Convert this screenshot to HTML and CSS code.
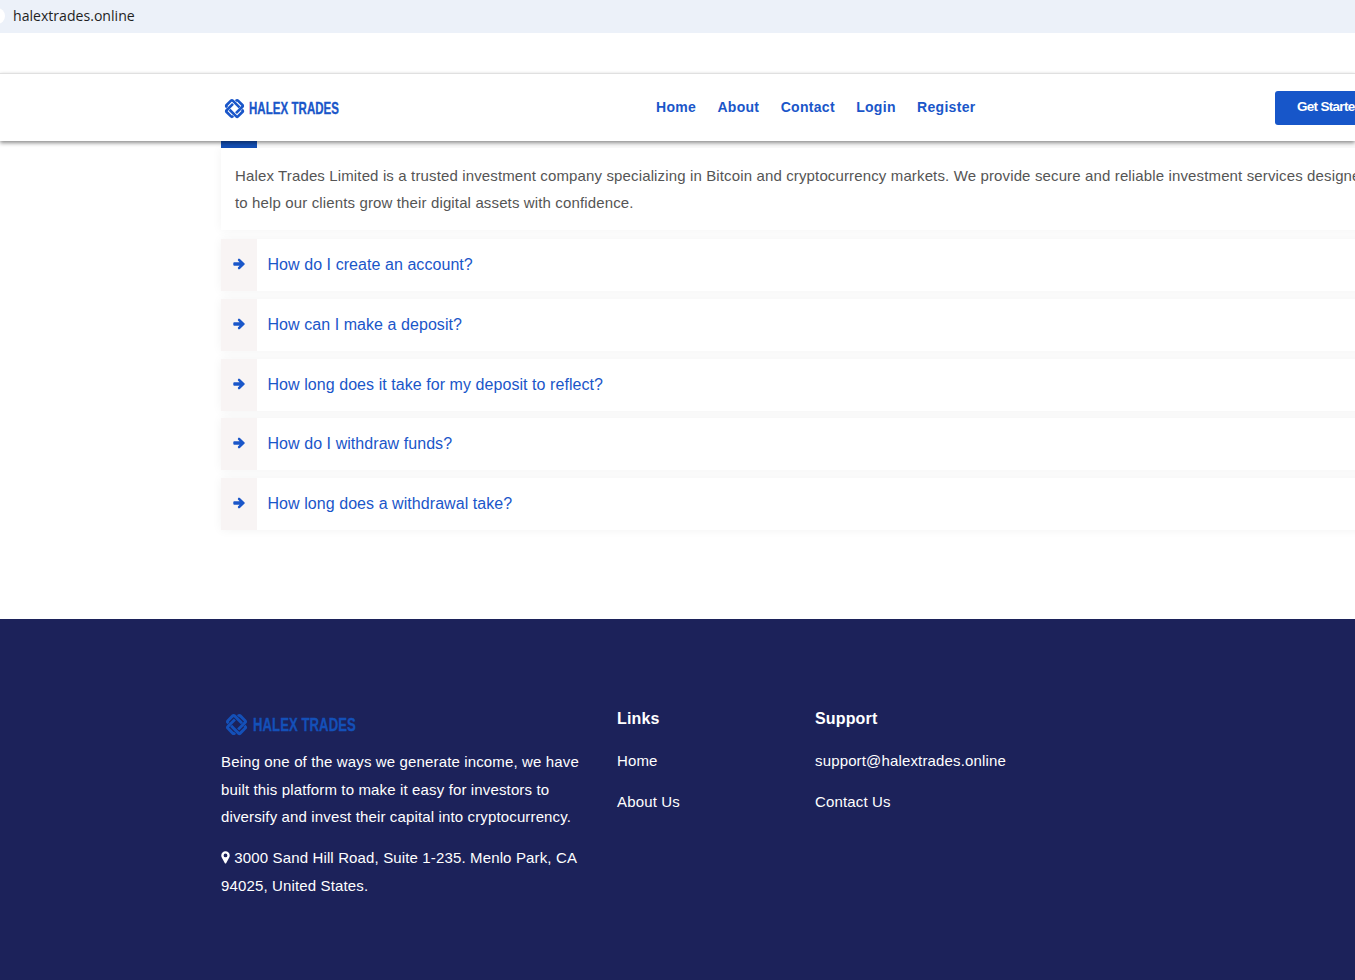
FILE: index.html
```html
<!DOCTYPE html>
<html lang="en">
<head>
<meta charset="utf-8">
<title>Halex Trades</title>
<link rel="stylesheet" href="styles.css">
</head>
<body>
<div class="addressbar"><span class="addressbar-dot"></span><span class="addressbar-url">halextrades.online</span></div>
<div class="topstrip"></div>
<header class="site-header">
  <div class="header-inner">
    <a class="logo logo-header" href="#">
      <svg class="logo-mark" viewBox="0 0 24 24" aria-hidden="true"><path d="M17.7 10.7 10 3Q9 2 8 3L3 8Q2 9 3 10L3.6 10.6M6.4 13.4 14 21Q15 22 16 21L21 16Q22 15 21 14L20.4 13.4M10.3 6.7 3 14Q2 15 3 16L8 21Q9 22 10 21L10.5 20.5M13.5 3.5 14 3Q15 2 16 3L21 8Q22 9 21 10L13.7 17.3"/></svg>
      <span class="logo-text">HALEX TRADES</span>
    </a>
    <nav class="main-nav">
      <a href="#">Home</a><a href="#">About</a><a href="#">Contact</a><a href="#">Login</a><a href="#">Register</a>
    </nav>
    <a class="cta" href="#">Get Started</a>
  </div>
</header>
<main class="faq">
  <div class="faq-tab"></div>
  <div class="faq-answer">
    <p>Halex Trades Limited is a trusted investment company specializing in Bitcoin and cryptocurrency markets. We provide secure and reliable investment services designed to help our clients grow their digital assets with confidence.</p>
  </div>
  <ul class="faq-list">
    <li class="faq-item"><span class="faq-icon"><svg viewBox="0 0 12 12" aria-hidden="true"><path d="M5.8.6 6.9 1 11.6 5.4Q12 6 11.6 6.6L6.9 11 5.8 11.4 4.9 10.5 4.9 9.4 6.6 7.7H.9L.3 7.1V4.9L.9 4.3H6.6L4.9 2.6V1.5Z"/></svg></span><span class="faq-q">How do I create an account?</span></li>
    <li class="faq-item"><span class="faq-icon"><svg viewBox="0 0 12 12" aria-hidden="true"><path d="M5.8.6 6.9 1 11.6 5.4Q12 6 11.6 6.6L6.9 11 5.8 11.4 4.9 10.5 4.9 9.4 6.6 7.7H.9L.3 7.1V4.9L.9 4.3H6.6L4.9 2.6V1.5Z"/></svg></span><span class="faq-q">How can I make a deposit?</span></li>
    <li class="faq-item"><span class="faq-icon"><svg viewBox="0 0 12 12" aria-hidden="true"><path d="M5.8.6 6.9 1 11.6 5.4Q12 6 11.6 6.6L6.9 11 5.8 11.4 4.9 10.5 4.9 9.4 6.6 7.7H.9L.3 7.1V4.9L.9 4.3H6.6L4.9 2.6V1.5Z"/></svg></span><span class="faq-q">How long does it take for my deposit to reflect?</span></li>
    <li class="faq-item"><span class="faq-icon"><svg viewBox="0 0 12 12" aria-hidden="true"><path d="M5.8.6 6.9 1 11.6 5.4Q12 6 11.6 6.6L6.9 11 5.8 11.4 4.9 10.5 4.9 9.4 6.6 7.7H.9L.3 7.1V4.9L.9 4.3H6.6L4.9 2.6V1.5Z"/></svg></span><span class="faq-q">How do I withdraw funds?</span></li>
    <li class="faq-item"><span class="faq-icon"><svg viewBox="0 0 12 12" aria-hidden="true"><path d="M5.8.6 6.9 1 11.6 5.4Q12 6 11.6 6.6L6.9 11 5.8 11.4 4.9 10.5 4.9 9.4 6.6 7.7H.9L.3 7.1V4.9L.9 4.3H6.6L4.9 2.6V1.5Z"/></svg></span><span class="faq-q">How long does a withdrawal take?</span></li>
  </ul>
</main>
<footer class="site-footer">
  <div class="footer-inner">
    <div class="footer-about">
      <a class="logo logo-footer" href="#">
        <svg class="logo-mark" viewBox="0 0 24 24" aria-hidden="true"><path d="M17.7 10.7 10 3Q9 2 8 3L3 8Q2 9 3 10L3.6 10.6M6.4 13.4 14 21Q15 22 16 21L21 16Q22 15 21 14L20.4 13.4M10.3 6.7 3 14Q2 15 3 16L8 21Q9 22 10 21L10.5 20.5M13.5 3.5 14 3Q15 2 16 3L21 8Q22 9 21 10L13.7 17.3"/></svg>
        <span class="logo-text">HALEX TRADES</span>
      </a>
      <p>Being one of the ways we generate income, we have built this platform to make it easy for investors to diversify and invest their capital into cryptocurrency.</p>
      <p class="address"><svg class="pin" viewBox="0 0 10 14" aria-hidden="true"><path fill-rule="evenodd" d="M5 0A4.7 4.7 0 0 0 .3 4.7C.3 6.4 1 7.3 1.6 8.4L4.3 13.3Q5 14.3 5.7 13.3L8.4 8.4C9 7.3 9.7 6.4 9.7 4.7A4.7 4.7 0 0 0 5 0ZM5 2.6A2.1 2.1 0 1 1 5 6.8 2.1 2.1 0 0 1 5 2.6Z"/></svg> 3000 Sand Hill Road, Suite 1-235. Menlo Park, CA 94025, United States.</p>
    </div>
    <div class="footer-col">
      <h4>Links</h4>
      <a href="#">Home</a>
      <a href="#">About Us</a>
    </div>
    <div class="footer-col">
      <h4>Support</h4>
      <a href="#">support@halextrades.online</a>
      <a href="#">Contact Us</a>
    </div>
  </div>
</footer>
</body>
</html>
```

FILE: styles.css
```css
* { box-sizing: border-box; }
html, body { margin: 0; height: 980px; overflow: hidden; background: #fff; }
body { font-family: "Liberation Sans", Arial, sans-serif; width: 1355px; }
a { text-decoration: none; color: inherit; }

.addressbar { height: 33px; background: #ecf1f9; display: flex; align-items: center; position: relative; overflow: hidden; }
.addressbar-dot { position: absolute; left: -11px; top: 8px; width: 16px; height: 16px; border-radius: 50%; background: #fff; }
.addressbar-url { margin: 0 0 1px 13px; font: 14.1px/1 "Open Sans", sans-serif; color: #1f1f1f; }
.topstrip { height: 40px; background: #fff; }

.site-header { height: 68px; background: #fff; border-top: 1px solid #e0e0e0; box-shadow: 0 2px 4px rgba(0,0,0,.45); position: relative; z-index: 2; }
.header-inner { width: 1200px; margin-left: 221px; height: 67px; display: grid; grid-template-columns: 435px 619px auto; align-items: center; }

.logo { display: flex; align-items: center; gap: 4px; padding-left: 3px; color: #1a56c9; }
.logo-header { margin-top: 1px; }
.logo-mark { width: 21px; height: 21px; flex: none; fill: none; stroke: currentColor; stroke-width: 3; }
.logo-text { font: 700 17px/1 "Liberation Sans", sans-serif; letter-spacing: .1px; white-space: nowrap; transform: scaleX(.675); transform-origin: left center; -webkit-text-stroke: .35px currentColor; }

.main-nav { display: flex; gap: 21.3px; margin-bottom: 2px; font-size: 14px; font-weight: 700; letter-spacing: .3px; color: #1a56c9; }
.cta { width: 130px; height: 34px; background: #1756c9; border-radius: 3px; color: #fff; font-size: 13.5px; font-weight: 700; letter-spacing: -.7px; padding: 8px 22px; white-space: nowrap; }

.faq { height: 478px; padding-left: 221px; }
.faq-tab { width: 36px; height: 7px; background: #1450b8; }
.faq-answer, .faq-list { width: 1180px; }
.faq-answer { height: 82px; padding: 14px 14px 0; background: #fff; box-shadow: 0 0 10px rgba(0,0,0,.05); }
.faq-answer p { margin: 0; max-width: 1148px; font-size: 15px; letter-spacing: .135px; line-height: 27px; color: #555; }
.faq-list { list-style: none; margin: 9px 0 0; padding: 0; display: flex; flex-direction: column; gap: 7.75px; }
.faq-item { height: 52px; display: flex; align-items: center; background: #fff; box-shadow: 0 0 10px rgba(0,0,0,.05); }
.faq-icon { width: 36px; height: 100%; background: #f8f4f4; display: flex; align-items: center; justify-content: center; }
.faq-icon svg { width: 12px; height: 12px; margin: 0 0 2px .5px; fill: #1a56c9; }
.faq-q { margin-left: 10.5px; font-size: 16px; letter-spacing: .06px; color: #1a56c9; }

.site-footer { height: 361px; background: #1c225a; color: #fff; }
.footer-inner { margin-left: 221px; padding-top: 90px; display: grid; grid-template-columns: 396px 198px 300px; }
.logo-footer { color: #1450b8; height: 30px; margin-bottom: 9px; padding-left: 4px; gap: 5px; }
.logo-footer .logo-text { font-size: 19px; transform: scaleX(.69); }
.logo-footer .logo-mark { width: 23px; height: 23px; }
.footer-about p { margin: 0 0 13px; width: 366px; font-size: 15px; letter-spacing: .14px; line-height: 27.5px; }
.footer-about .address { line-height: 28px; }
.pin { width: 9px; height: 13px; fill: #fff; vertical-align: -1px; }
.footer-col { display: flex; flex-direction: column; align-items: flex-start; font-size: 15px; letter-spacing: .15px; }
.footer-col h4 { margin: 0 0 23px; font-size: 16px; line-height: 20px; font-weight: 700; }
.footer-col a { line-height: 17px; margin-bottom: 24px; }
```
